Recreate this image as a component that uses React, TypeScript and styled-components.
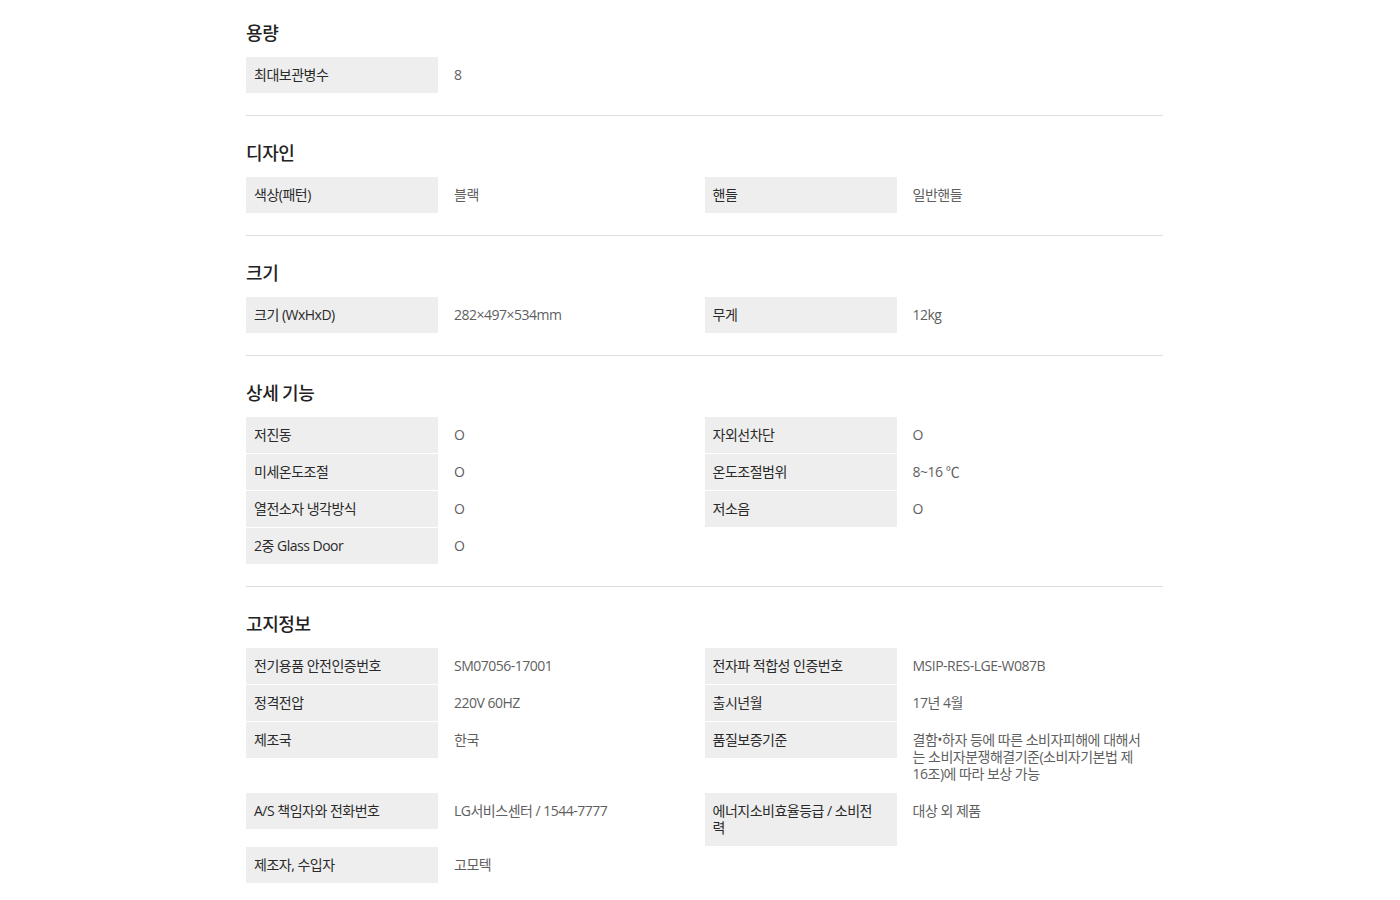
import { FC } from 'react';
import styled, { createGlobalStyle } from 'styled-components';

const GlobalStyle = createGlobalStyle`
  html, body {
    margin: 0;
    padding: 0;
    background: #ffffff;
  }
  body {
    font-family: "Open Sans", "Noto Sans CJK KR", sans-serif;
    color: #333333;
  }
`;

const Page = styled.div`
  margin-left: 246px;
  width: 917px;
`;

const Section = styled.section`
  padding: 24px 0 21px;
  border-bottom: 1px solid #dddddd;

  &:first-child {
    padding-top: 20px;
  }

  &:last-child {
    border-bottom: none;
  }
`;

const SectionTitle = styled.h3`
  margin: 0 0 13px;
  font-family: "Noto Sans CJK KR", sans-serif;
  font-size: 18px;
  line-height: 24px;
  font-weight: 500;
  color: #222222;
  letter-spacing: -0.4px;
`;

const SpecList = styled.dl`
  display: flex;
  flex-wrap: wrap;
  margin: 0;
`;

const SpecItem = styled.div`
  display: flex;
  align-items: flex-start;
  width: 50%;
  margin-bottom: 1px;
`;

const SpecLabel = styled.dt`
  box-sizing: border-box;
  flex: 0 0 192px;
  padding: 9px 18px 10px 8px;
  background: #eeeeee;
  font-size: 14px;
  line-height: 17px;
  color: #2a2a2a;
  letter-spacing: -0.5px;
`;

const SpecValue = styled.dd`
  box-sizing: border-box;
  flex: 1;
  margin: 0;
  padding: 9px 17px 10px 16px;
  font-size: 14px;
  line-height: 17px;
  color: #5f5f5f;
  letter-spacing: -0.5px;
`;

interface Spec {
  label: string;
  value: string;
}

interface SpecSection {
  title: string;
  specs: Spec[];
}

const sections: SpecSection[] = [
  {
    title: '용량',
    specs: [{ label: '최대보관병수', value: '8' }],
  },
  {
    title: '디자인',
    specs: [
      { label: '색상(패턴)', value: '블랙' },
      { label: '핸들', value: '일반핸들' },
    ],
  },
  {
    title: '크기',
    specs: [
      { label: '크기 (WxHxD)', value: '282×497×534mm' },
      { label: '무게', value: '12kg' },
    ],
  },
  {
    title: '상세 기능',
    specs: [
      { label: '저진동', value: 'O' },
      { label: '자외선차단', value: 'O' },
      { label: '미세온도조절', value: 'O' },
      { label: '온도조절범위', value: '8~16 ℃' },
      { label: '열전소자 냉각방식', value: 'O' },
      { label: '저소음', value: 'O' },
      { label: '2중 Glass Door', value: 'O' },
    ],
  },
  {
    title: '고지정보',
    specs: [
      { label: '전기용품 안전인증번호', value: 'SM07056-17001' },
      { label: '전자파 적합성 인증번호', value: 'MSIP-RES-LGE-W087B' },
      { label: '정격전압', value: '220V 60HZ' },
      { label: '출시년월', value: '17년 4월' },
      { label: '제조국', value: '한국' },
      {
        label: '품질보증기준',
        value: '결함•하자 등에 따른 소비자피해에 대해서는 소비자분쟁해결기준(소비자기본법 제16조)에 따라 보상 가능',
      },
      { label: 'A/S 책임자와 전화번호', value: 'LG서비스센터 / 1544-7777' },
      { label: '에너지소비효율등급 / 소비전력', value: '대상 외 제품' },
      { label: '제조자, 수입자', value: '고모텍' },
    ],
  },
];

const App: FC = () => (
  <>
    <GlobalStyle />
    <Page>
      {sections.map((section) => (
        <Section key={section.title}>
          <SectionTitle>{section.title}</SectionTitle>
          <SpecList>
            {section.specs.map((spec) => (
              <SpecItem key={spec.label}>
                <SpecLabel>{spec.label}</SpecLabel>
                <SpecValue>{spec.value}</SpecValue>
              </SpecItem>
            ))}
          </SpecList>
        </Section>
      ))}
    </Page>
  </>
);

export default App;
